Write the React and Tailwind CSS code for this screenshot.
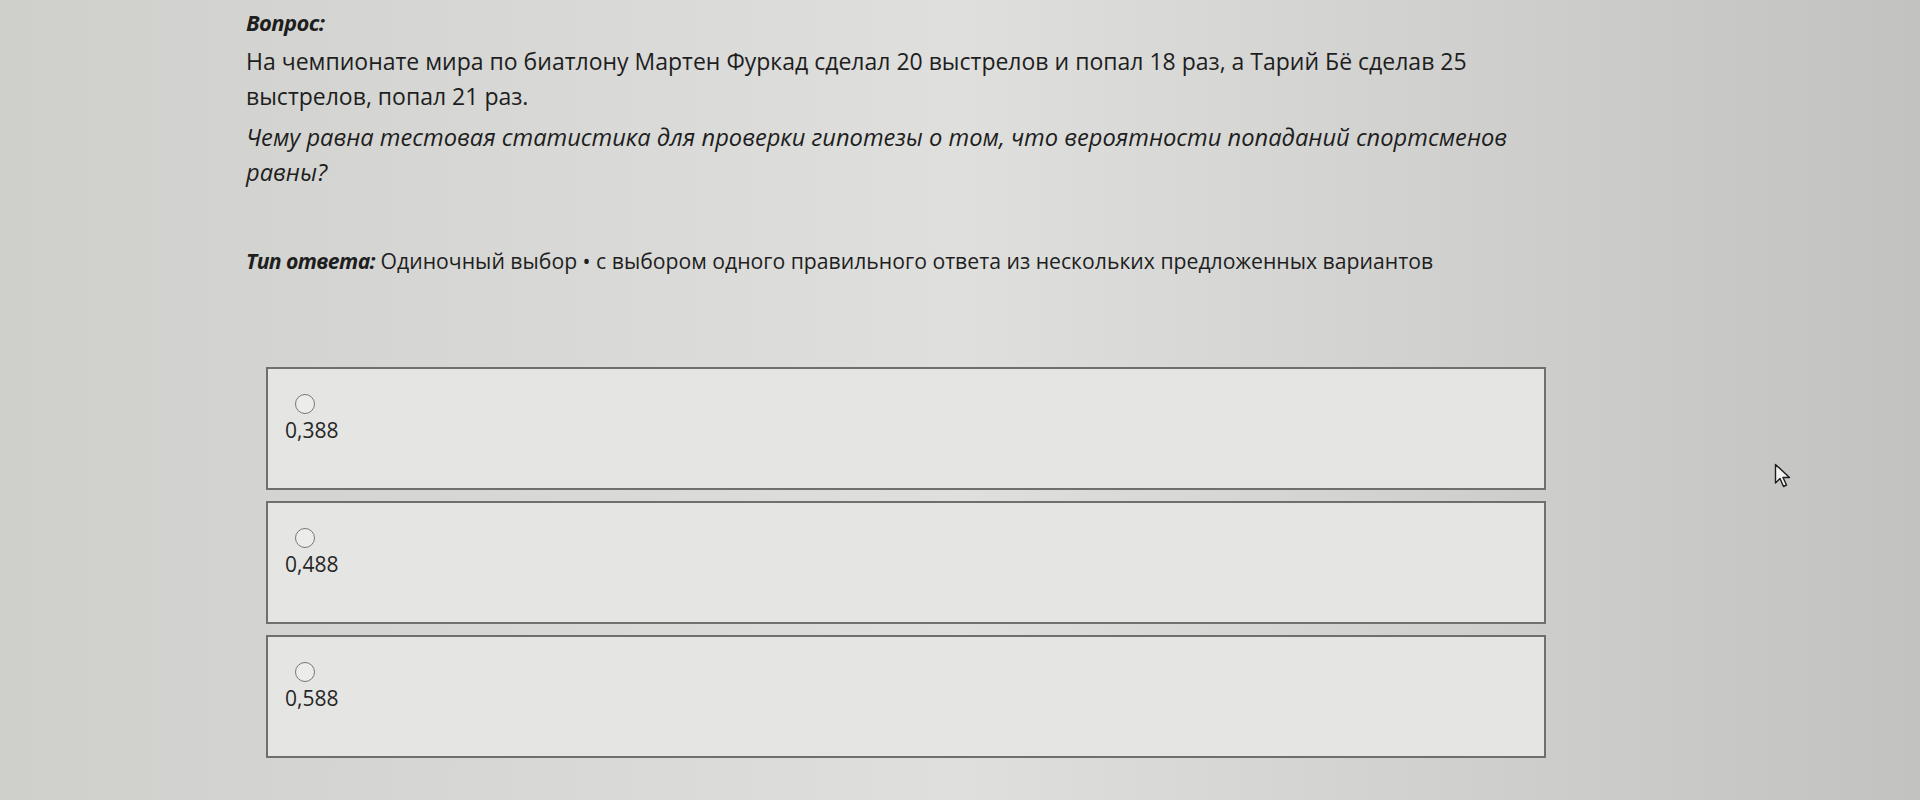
import React from 'react';

const options = ['0,388', '0,488', '0,588'];

const Cursor = () => (
    <svg width="18" height="26" viewBox="0 0 18 26" className="absolute left-[1774px] top-[463px]">
        <path d="M1.5 1.5 L1.5 20 L6 15.5 L9.5 23.5 L12.5 22 L9 14.5 L15.5 14.5 Z" fill="#f2f2f2" stroke="#1e1e1e" strokeWidth="1.4" strokeLinejoin="round" />
    </svg>
);

const Option = ({ value }) => (
    <label className="flex flex-col items-start w-[1280px] h-[123px] border-2 border-[#6f6f6d] bg-[#e5e6e4] pl-[17px] pt-[25px] cursor-pointer">
        <span className="ml-[10px] w-[20px] h-[20px] rounded-full border-[1.5px] border-[#777] bg-[#ececea]"></span>
        <span className="mt-[2px] text-[21px] leading-[28px] text-[#262626]">{value}</span>
    </label>
);

export default function App() {
    return (
        <div
            className="relative w-[1920px] h-[800px] overflow-hidden bg-gradient-to-r from-[#cfcfcc] via-[#dfe0de] to-[#c2c2c0] text-[#1e1e1e]"
            style={{ fontFamily: '"Open Sans", "Noto Sans", sans-serif' }}
        >
            <div className="pl-[246px] pt-[6px]">
                <div className="text-[22px] leading-[32px] font-bold italic tracking-[-0.6px]">Вопрос:</div>
                <p className="mt-[6px] text-[23px] leading-[35px]">
                    На чемпионате мира по биатлону Мартен Фуркад сделал 20 выстрелов и попал 18 раз, а Тарий Бё сделав 25
                    <br />
                    выстрелов, попал 21 раз.
                </p>
                <p className="mt-[6px] text-[23.7px] leading-[35px] italic">
                    Чему равна тестовая статистика для проверки гипотезы о том, что вероятности попаданий спортсменов
                    <br />
                    равны?
                </p>
                <div className="mt-[55px] text-[21.2px] leading-[32px]">
                    <span className="font-bold italic tracking-[-0.6px]">Тип ответа:</span> Одиночный выбор • с выбором одного правильного ответа из нескольких предложенных вариантов
                </div>
            </div>

            <div className="mt-[90px] ml-[266px] flex flex-col gap-[11px]">
                {options.map((o) => (
                    <Option key={o} value={o} />
                ))}
            </div>

            <Cursor />
        </div>
    );
}
